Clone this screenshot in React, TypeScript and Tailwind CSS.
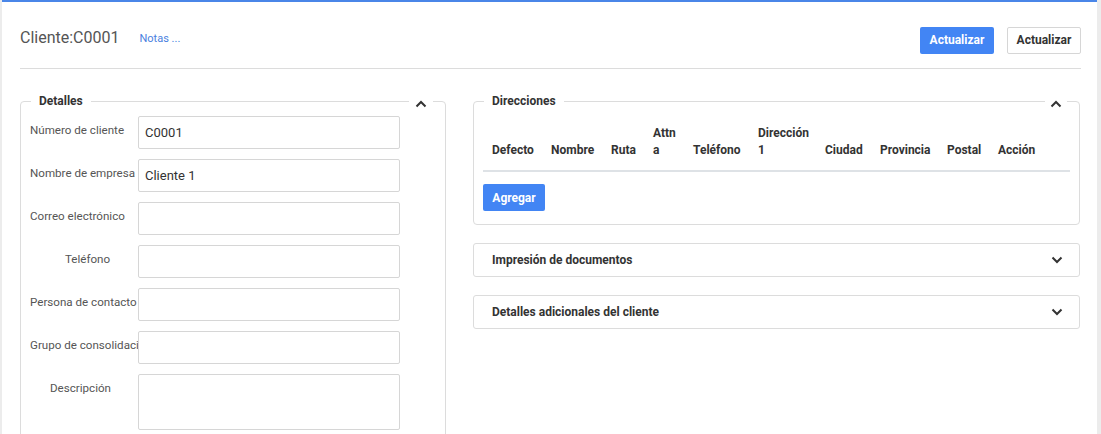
import React from 'react';

const FIELDS = [
    { label: 'Número de cliente', value: 'C0001', pad: 'pl-0' },
    { label: 'Nombre de empresa', value: 'Cliente 1', pad: 'pl-0' },
    { label: 'Correo electrónico', value: '', pad: 'pl-0' },
    { label: 'Teléfono', value: '', pad: 'pl-[35px]' },
    { label: 'Persona de contacto', value: '', pad: 'pl-0' },
    { label: 'Grupo de consolidación', value: '', pad: 'pl-0' },
];

const COLUMNS = [
    { label: 'Defecto', w: 'w-[59px]' },
    { label: 'Nombre', w: 'w-[60px]' },
    { label: 'Ruta', w: 'w-[42px]' },
    { label: 'Attn a', w: 'w-[40px]' },
    { label: 'Teléfono', w: 'w-[65px]' },
    { label: 'Dirección 1', w: 'w-[67px]' },
    { label: 'Ciudad', w: 'w-[55px]' },
    { label: 'Provincia', w: 'w-[67px]' },
    { label: 'Postal', w: 'w-[51px]' },
    { label: 'Acción', w: 'w-auto' },
];

function Chevron({ up }: { up?: boolean }) {
    return (
        <svg width="12" height="8" viewBox="0 0 12 8" fill="none">
            <path
                d={up ? 'M1.5 6.5 L6 2 L10.5 6.5' : 'M1.5 1.5 L6 6 L10.5 1.5'}
                stroke="#333"
                strokeWidth="2"
            />
        </svg>
    );
}

function Accordion({ title }: { title: string }) {
    return (
        <div className="h-[34px] border border-[#dcdcdc] rounded-[3px] flex items-center justify-between pl-[18px] pr-[16px]">
            <span className="text-[12px] font-bold text-[#333]">{title}</span>
            <Chevron />
        </div>
    );
}

export default function App() {
    return (
        <div className="bg-[#ececec] h-[434px] pl-[2px] pr-[4px] overflow-hidden" style={{ fontFamily: 'Roboto, "Liberation Sans", sans-serif' }}>
            <div className="bg-white h-full border-t-2 border-[#4a86e8] pl-[18px] pr-[16px]">
                {/* header */}
                <div className="flex items-center h-[67px] pt-[24px] pb-[14px] border-b border-[#dcdcdc]">
                    <h1 className="text-[16px] text-[#555] leading-none -mt-[5px]">Cliente:C0001</h1>
                    <a className="ml-[20px] text-[11px] text-[#4a7fe0] -mt-[1px]">Notas ...</a>
                    <div className="ml-auto flex gap-[13px]">
                        <button className="h-[27px] w-[74px] bg-[#4285f4] text-white text-[12px] font-bold rounded-[2px]">Actualizar</button>
                        <button className="h-[27px] w-[74px] bg-white border border-[#d6d6d6] text-[#333] text-[12px] font-bold rounded-[2px]">Actualizar</button>
                    </div>
                </div>

                <div className="flex gap-[27px] pt-[24px]">
                    {/* Detalles */}
                    <fieldset className="relative w-[426px] shrink-0 border border-[#dcdcdc] rounded-[4px] px-[9px] pb-[20px] h-[360px]">
                        <legend className="ml-[1px] px-[8px] text-[12px] font-bold text-[#333] leading-[16px]">Detalles</legend>
                        <button className="absolute right-[12px] -top-[12px] bg-white px-[6px] h-[14px] flex items-center">
                            <Chevron up />
                        </button>
                        <div className="flex flex-col gap-[10px] pt-[7px]">
                            {FIELDS.map((f) => (
                                <div key={f.label} className="flex">
                                    <label className={`w-[108px] shrink-0 overflow-hidden whitespace-nowrap text-[11.6px] text-[#555] pt-[6px] ${f.pad}`}>
                                        {f.label}
                                    </label>
                                    <input
                                        readOnly
                                        value={f.value}
                                        className="w-[262px] h-[33px] border border-[#d6d6d6] rounded-[2px] px-[6px] text-[13px] text-[#333] outline-none"
                                    />
                                </div>
                            ))}
                            <div className="flex">
                                <label className="w-[108px] shrink-0 text-[11.6px] text-[#555] pt-[6px] pl-[20px]">Descripción</label>
                                <textarea readOnly className="w-[262px] h-[56px] border border-[#d6d6d6] rounded-[2px] resize-none outline-none" />
                            </div>
                        </div>
                    </fieldset>

                    {/* right column */}
                    <div className="flex-1 flex flex-col gap-[18px] pr-[1px]">
                        <fieldset className="relative border border-[#dcdcdc] rounded-[4px] px-[9px] pb-[13px]">
                            <legend className="ml-[1px] px-[8px] text-[12px] font-bold text-[#333] leading-[16px]">Direcciones</legend>
                            <button className="absolute right-[12px] -top-[12px] bg-white px-[5px] h-[14px] flex items-center">
                                <Chevron up />
                            </button>
                            <table className="w-full table-fixed mt-[2px]">
                                <thead>
                                    <tr className="border-b-2 border-[#dee2e6]">
                                        {COLUMNS.map((c) => (
                                            <th
                                                key={c.label}
                                                className={`${c.w} align-bottom text-left px-[9px] pt-[14px] pb-[11px] text-[12px] font-bold text-[#333] leading-[17px]`}
                                            >
                                                {c.label}
                                            </th>
                                        ))}
                                    </tr>
                                </thead>
                            </table>
                            <button className="mt-[12px] h-[27px] w-[62px] bg-[#4285f4] text-white text-[12px] font-bold rounded-[2px]">Agregar</button>
                        </fieldset>
                        <Accordion title="Impresión de documentos" />
                        <Accordion title="Detalles adicionales del cliente" />
                    </div>
                </div>
            </div>
        </div>
    );
}
